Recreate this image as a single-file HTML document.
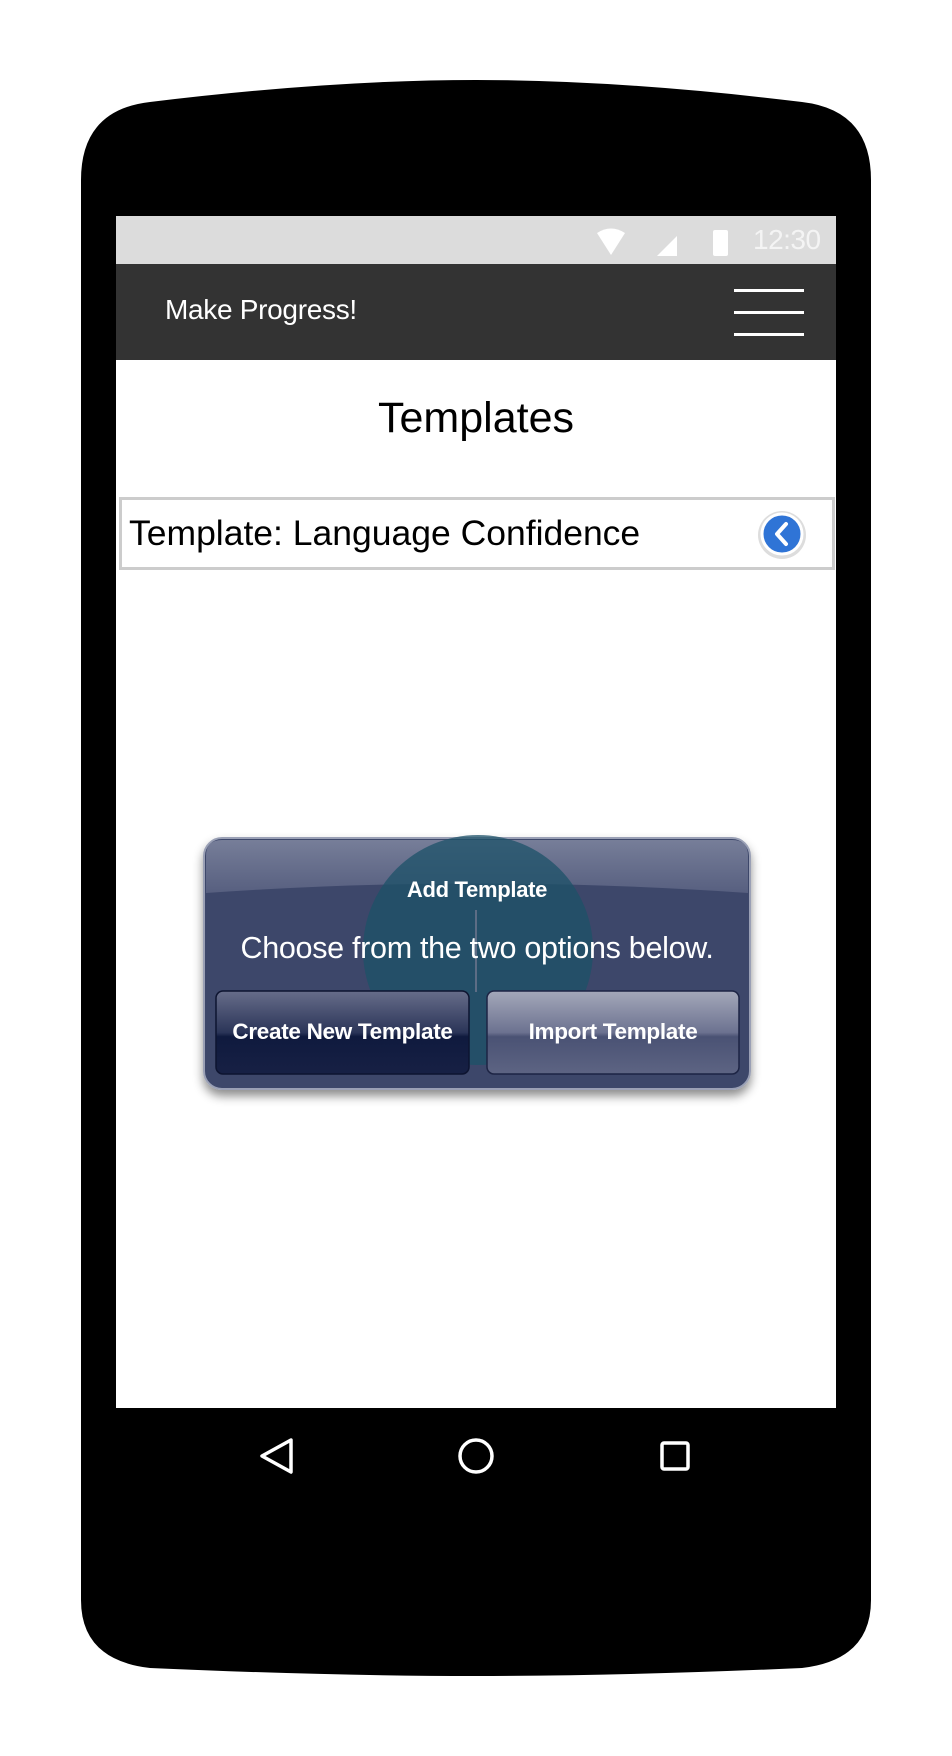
<!DOCTYPE html>
<html><head><meta charset="utf-8"><style>
*{margin:0;padding:0;box-sizing:border-box}
body{width:952px;height:1756px;background:#fff;position:relative;overflow:hidden;font-family:"Liberation Sans",sans-serif}
.abs{position:absolute}
</style></head><body>
<svg class="abs" style="left:0;top:0" width="952" height="1756">
<path d="M81 180 Q81 110 150 102 Q330 80 476 80 Q622 80 802 102 Q871 110 871 180 L871 1600 Q871 1660 802 1668 Q622 1676 476 1676 Q330 1676 150 1668 Q81 1660 81 1600 Z" fill="#000"/>
<rect x="116" y="216" width="720" height="1192" fill="#fff"/>
<rect x="116" y="216" width="720" height="48" fill="#dcdcdc"/>
<rect x="116" y="264" width="720" height="96" fill="#333"/>
<path d="M597 233 Q611 224 625 233 L611 255 Z" fill="#fff"/>
<path d="M677 236 L677 256 L657 256 Z" fill="#fff"/>
<rect x="713" y="230" width="15" height="26" rx="2" fill="#fff"/>
<rect x="734" y="289" width="70" height="3" fill="#fff"/>
<rect x="734" y="311" width="70" height="3" fill="#fff"/>
<rect x="734" y="333" width="70" height="3" fill="#fff"/>
<rect x="120.5" y="498.5" width="713" height="70" fill="#fff" stroke="#ccc" stroke-width="3"/>
<circle cx="782" cy="535" r="24" fill="#ddd"/>
<circle cx="782" cy="534" r="20" fill="#2f74d6" stroke="#fff" stroke-width="3"/>
<path d="M786 524 L777 534 L786 544" fill="none" stroke="#fff" stroke-width="4" stroke-linecap="round" stroke-linejoin="round"/>
<path d="M291 1440 L262 1456 L291 1472 Z" fill="none" stroke="#fff" stroke-width="3.5" stroke-linejoin="round"/>
<circle cx="476" cy="1456" r="16" fill="none" stroke="#fff" stroke-width="3.5"/>
<rect x="662" y="1443" width="26" height="26" rx="2" fill="none" stroke="#fff" stroke-width="3.5"/>
<defs>
<linearGradient id="gl" x1="0" y1="0" x2="0" y2="1"><stop offset="0" stop-color="#7d849e"/><stop offset="1" stop-color="#5a6282"/></linearGradient>
<linearGradient id="b1" x1="0" y1="0" x2="0" y2="1"><stop offset="0" stop-color="#676d8a"/><stop offset="0.5" stop-color="#2b3558"/><stop offset="0.55" stop-color="#0f1a3e"/><stop offset="1" stop-color="#172044"/></linearGradient>
<linearGradient id="b2" x1="0" y1="0" x2="0" y2="1"><stop offset="0" stop-color="#a4a8ba"/><stop offset="0.5" stop-color="#6c7290"/><stop offset="0.55" stop-color="#4a5274"/><stop offset="1" stop-color="#5d6483"/></linearGradient>
<filter id="sh"><feDropShadow dx="0" dy="6" stdDeviation="5" flood-color="#000" flood-opacity="0.45"/></filter>
</defs>
<rect x="204" y="838" width="546" height="251" rx="18" fill="#3c476a" stroke="#9aa0b5" stroke-width="2" filter="url(#sh)"/>
<path d="M206 856 Q206 840 222 840 L732 840 Q748 840 748 856 L748 893 Q476 874 206 893 Z" fill="url(#gl)" opacity="0.9"/>
<circle cx="478" cy="950" r="115" fill="#1c5268" opacity="0.75"/>
<rect x="475" y="910" width="2" height="82" fill="#5d6d85"/>
<rect x="216" y="991" width="253" height="83" rx="7" fill="url(#b1)" stroke="#0d1430" stroke-width="1.5"/>
<rect x="487" y="991" width="252" height="83" rx="7" fill="url(#b2)" stroke="#1d2444" stroke-width="1.5"/>
</svg>
<div class="abs" style="left:753px;top:224px;font-size:28px;color:#f4f4f4;letter-spacing:-0.5px">12:30</div>
<div class="abs" style="left:165px;top:294px;font-size:28px;color:#fff;letter-spacing:-0.3px">Make Progress!</div>
<div class="abs" style="left:116px;width:720px;top:394px;text-align:center;font-size:43px;color:#000">Templates</div>
<div class="abs" style="left:129px;top:513px;font-size:35.5px;color:#000">Template: Language Confidence</div>
<div class="abs" style="left:204px;width:546px;top:877px;text-align:center;font-size:22px;font-weight:bold;color:#fff;letter-spacing:-0.3px">Add Template</div>
<div class="abs" style="left:204px;width:546px;top:931px;text-align:center;font-size:30.5px;color:#fff;letter-spacing:-0.3px">Choose from the two options below.</div>
<div class="abs" style="left:216px;width:253px;top:1019px;text-align:center;font-size:22.5px;font-weight:bold;color:#fff;letter-spacing:-0.3px">Create New Template</div>
<div class="abs" style="left:487px;width:252px;top:1019px;text-align:center;font-size:22.5px;font-weight:bold;color:#fff;letter-spacing:-0.3px">Import Template</div>
</body></html>
